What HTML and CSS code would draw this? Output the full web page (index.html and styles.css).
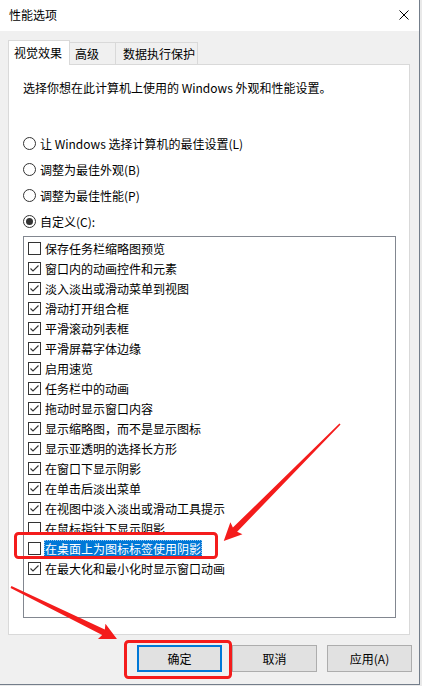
FILE: index.html
```html
<!doctype html>
<html>
<head>
	<meta charset="utf-8">
	<title>性能选项</title>
	<link rel="stylesheet" href="styles.css">
</head>
<body>
	<div class="window">
		<div class="titlebar">
			<span class="title">性能选项</span>
			<svg class="close" width="10" height="10" viewBox="0 0 10 10">
				<path d="M0.5 0.5 L9.5 9.5 M9.5 0.5 L0.5 9.5" stroke="#000" stroke-width="1" fill="none"/>
			</svg>
		</div>

		<div class="tabs">
			<span class="tab tab-active">视觉效果</span>
			<span class="tab tab-2">高级</span>
			<span class="tab tab-3">数据执行保护</span>
		</div>

		<div class="panel">
			<p class="desc">选择你想在此计算机上使用的 Windows 外观和性能设置。</p>

			<div class="radios">
				<label class="radio"><span class="circle"></span>让 Windows 选择计算机的最佳设置(L)</label>
				<label class="radio"><span class="circle"></span>调整为最佳外观(B)</label>
				<label class="radio"><span class="circle"></span>调整为最佳性能(P)</label>
				<label class="radio"><span class="circle on"></span>自定义(C):</label>
			</div>

			<ul class="list">
				<li class="item"><span class="box"></span><span class="label">保存任务栏缩略图预览</span></li>
				<li class="item"><span class="box checked"></span><span class="label">窗口内的动画控件和元素</span></li>
				<li class="item"><span class="box checked"></span><span class="label">淡入淡出或滑动菜单到视图</span></li>
				<li class="item"><span class="box checked"></span><span class="label">滑动打开组合框</span></li>
				<li class="item"><span class="box checked"></span><span class="label">平滑滚动列表框</span></li>
				<li class="item"><span class="box checked"></span><span class="label">平滑屏幕字体边缘</span></li>
				<li class="item"><span class="box checked"></span><span class="label">启用速览</span></li>
				<li class="item"><span class="box checked"></span><span class="label">任务栏中的动画</span></li>
				<li class="item"><span class="box checked"></span><span class="label">拖动时显示窗口内容</span></li>
				<li class="item"><span class="box checked"></span><span class="label">显示缩略图，而不是显示图标</span></li>
				<li class="item"><span class="box checked"></span><span class="label">显示亚透明的选择长方形</span></li>
				<li class="item"><span class="box checked"></span><span class="label">在窗口下显示阴影</span></li>
				<li class="item"><span class="box checked"></span><span class="label">在单击后淡出菜单</span></li>
				<li class="item"><span class="box checked"></span><span class="label">在视图中淡入淡出或滑动工具提示</span></li>
				<li class="item"><span class="box"></span><span class="label">在鼠标指针下显示阴影</span></li>
				<li class="item"><span class="box"></span><span class="label label-selected">在桌面上为图标标签使用阴影</span></li>
				<li class="item"><span class="box checked"></span><span class="label">在最大化和最小化时显示窗口动画</span></li>
			</ul>
		</div>

		<div class="buttons">
			<span class="btn btn-default">确定</span>
			<span class="btn">取消</span>
			<span class="btn">应用(A)</span>
		</div>

		<!-- red annotations drawn over the dialog -->
		<svg class="marks" width="422" height="686" viewBox="0 0 422 686">
			<rect x="15.5" y="533.5" width="201" height="24" rx="3" fill="none" stroke="#f41c1c" stroke-width="3"/>
			<rect x="125.5" y="641.5" width="105" height="36" rx="3" fill="none" stroke="#f41c1c" stroke-width="3"/>
			<polygon fill="#f41c1c" points="0,-0.8 149,-3 147,-8.5 165,0 147,8.5 149,3 0,0.8" transform="translate(340 424) rotate(134.8)"/>
			<polygon fill="#f41c1c" points="0,-1 103,-3 101,-8.5 118,0 101,8.5 103,3 0,1" transform="translate(11 587) rotate(26.1)"/>
		</svg>
	</div>
</body>
</html>
```

FILE: styles.css
```css
body {
	margin: 0;
	background-color: #e9e9e9;
	font-family: "Noto Sans CJK SC", "Liberation Sans", sans-serif;
	font-size: 12px;
	color: #000;
}
.window {
	position: relative;
	width: 419px;
	height: 684px;
	border-right: 1px solid #737d8a;
	border-bottom: 1px solid #737d8a;
	background-color: #f0f0f0;
}
.titlebar {
	display: flex;
	align-items: center;
	justify-content: space-between;
	height: 31px;
	padding: 0 10px 1px 9px;
	background-color: #fff;
	box-sizing: border-box;
}
.title {
	line-height: 30px;
}

/* tabs */
.tabs {
	display: flex;
	align-items: flex-end;
	height: 24px;
	margin: 9px 0 0 8px;
}
.tab {
	box-sizing: border-box;
	height: 22px;
	line-height: 21px;
	border: 1px solid #d9d9d9;
	border-bottom: 0;
	background-color: #f0f0f0;
	margin-left: -1px;
}
.tab-active {
	position: relative;
	z-index: 1;
	height: 25px;
	margin: 0 0 -1px 0;
	padding: 1px 7px 0 5px;
	background-color: #fff;
	line-height: 22px;
}
.tab-2 {
	padding: 0 16px 0 5px;
}
.tab-3 {
	padding: 0 2px 0 7px;
}

/* panel */
.panel {
	box-sizing: border-box;
	width: 402px;
	height: 571px;
	margin: 0 8px;
	padding: 13px 0 0 14px;
	border: 1px solid #d9d9d9;
	background-color: #fff;
}
.desc {
	margin: 0;
	line-height: 20px;
}
.radios {
	margin-top: 32px;
}
.radio {
	display: flex;
	align-items: center;
	height: 26px;
}
.circle {
	box-sizing: border-box;
	display: flex;
	align-items: center;
	justify-content: center;
	width: 13px;
	height: 13px;
	margin-right: 4px;
	border: 1px solid #333;
	border-radius: 50%;
}
.circle.on::after {
	content: "";
	width: 7px;
	height: 7px;
	border-radius: 50%;
	background-color: #333;
}

/* list of effects */
.list {
	box-sizing: border-box;
	width: 373px;
	height: 382px;
	margin: 2px 0 0 0;
	padding: 1px 0 0 4px;
	list-style: none;
	border: 1px solid #828790;
}
.item {
	display: flex;
	align-items: center;
	height: 20px;
}
.box {
	box-sizing: border-box;
	width: 13px;
	height: 13px;
	margin-right: 3px;
	border: 1px solid #333;
	background-color: #fff;
}
.box.checked {
	background-image: url("data:image/svg+xml,%3Csvg xmlns='http://www.w3.org/2000/svg' width='11' height='11' viewBox='0 0 11 11'%3E%3Cpath d='M1.5 5.5 L4 8 L9.5 2.5' fill='none' stroke='%23333' stroke-width='1.1'/%3E%3C/svg%3E");
	background-repeat: no-repeat;
}
.label {
	padding: 0 1px;
	line-height: 17px;
}
.label-selected {
	background-color: #0078d7;
	color: #fff;
	outline: 1px dotted #8fc3ee;
	outline-offset: -1px;
}

/* dialog buttons */
.buttons {
	display: flex;
	justify-content: flex-end;
	gap: 10px;
	margin-top: 10px;
	padding-right: 7px;
}
.btn {
	box-sizing: border-box;
	width: 85px;
	height: 27px;
	line-height: 25px;
	text-align: center;
	border: 1px solid #adadad;
	background-color: #e1e1e1;
}
.btn-default {
	border: 2px solid #0078d7;
	line-height: 23px;
}
.marks {
	position: absolute;
	top: 0;
	left: 0;
	pointer-events: none;
}
```
